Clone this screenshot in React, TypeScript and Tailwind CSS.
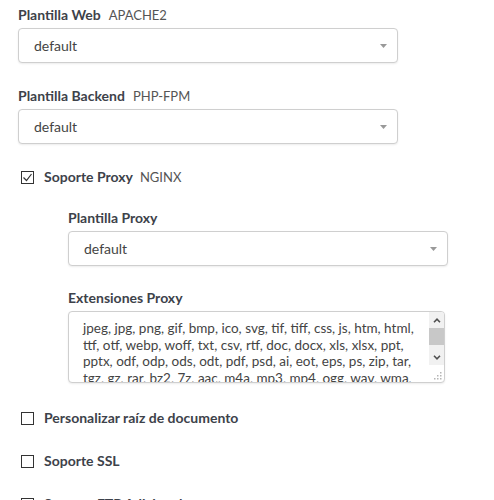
const EXTENSIONS = [
  "jpeg, jpg, png, gif, bmp, ico, svg, tif, tiff, css, js, htm, html,",
  "ttf, otf, webp, woff, txt, csv, rtf, doc, docx, xls, xlsx, ppt,",
  "pptx, odf, odp, ods, odt, pdf, psd, ai, eot, eps, ps, zip, tar,",
  "tgz, gz, rar, bz2, 7z, aac, m4a, mp3, mp4, ogg, wav, wma,",
  "3gp, avi, flv, m4v, mkv, mov, mpeg, mpg, wmv, exe, iso, dmg,",
  "swf, woff2",
];

function Caret() {
  return (
    <svg width="7" height="4" viewBox="0 0 7 4" className="shrink-0">
      <path d="M0 0h7L3.5 4z" fill="#999" />
    </svg>
  );
}

function Select({ width }: { width: string }) {
  return (
    <div
      className={`${width} h-[35px] flex items-center justify-between pl-[15px] pr-[10px] border border-[#cfcfcf] rounded-[4px] bg-white shadow-[0_1px_2px_rgba(0,0,0,0.08)]`}
    >
      <span className="text-[14px] text-[#444]">default</span>
      <Caret />
    </div>
  );
}

function Label({ title, hint }: { title: string; hint?: string }) {
  return (
    <div className="h-5 leading-5 mb-[3px] flex items-baseline gap-[8px]">
      <span className="text-[14px] font-bold text-[#3d424a]">{title}</span>
      {hint && <span className="text-[13px] text-[#555]">{hint}</span>}
    </div>
  );
}

function Check({ label, hint, checked }: { label: string; hint?: string; checked?: boolean }) {
  return (
    <div className="h-5 flex items-center pl-[3px]">
      <span className="w-[13px] h-[13px] border border-[#333] flex items-center justify-center bg-white">
        {checked && (
          <svg width="11" height="11" viewBox="0 0 11 11">
            <path d="M1.5 5.5l3 3 5-6.5" fill="none" stroke="#333" strokeWidth="1.2" />
          </svg>
        )}
      </span>
      <span className="ml-[10px] text-[14px] font-bold text-[#3d424a] leading-5">{label}</span>
      {hint && <span className="ml-[7px] text-[13px] text-[#555] leading-5">{hint}</span>}
    </div>
  );
}

// textarea with classic scrollbar and resize grip
function ExtensionsBox() {
  return (
    <div className="w-[377px] h-[72px] flex border border-[#cfcfcf] rounded-[4px] bg-white shadow-[0_1px_2px_rgba(0,0,0,0.08)] overflow-hidden">
      <div className="flex-1 overflow-hidden pl-[14px] pt-[8px] text-[13.5px] leading-[16.5px] text-[#444] whitespace-pre">
        {EXTENSIONS.join("\n")}
      </div>
      <div className="w-[15px] flex flex-col">
        <div className="h-[53px] bg-[#f1f1f1] flex flex-col">
          <div className="h-[16px] flex items-center justify-center">
            <svg width="8" height="5" viewBox="0 0 8 5">
              <path d="M1 4.2L4 1.2l3 3" fill="none" stroke="#505050" strokeWidth="1.6" />
            </svg>
          </div>
          <div className="h-[17px] bg-[#c8c8c8]" />
          <div className="flex-1" />
          <div className="h-[16px] flex items-center justify-center">
            <svg width="8" height="5" viewBox="0 0 8 5">
              <path d="M1 0.8L4 3.8l3-3" fill="none" stroke="#505050" strokeWidth="1.6" />
            </svg>
          </div>
        </div>
        <div className="flex-1 flex items-end justify-end p-[2px]">
          <svg width="8" height="8" viewBox="0 0 8 8">
            <g fill="#b5b5b5">
              <rect x="6" y="0" width="1.5" height="1.5" />
              <rect x="3" y="3" width="1.5" height="1.5" />
              <rect x="6" y="3" width="1.5" height="1.5" />
              <rect x="0" y="6" width="1.5" height="1.5" />
              <rect x="3" y="6" width="1.5" height="1.5" />
              <rect x="6" y="6" width="1.5" height="1.5" />
            </g>
          </svg>
        </div>
      </div>
    </div>
  );
}

export default function App() {
  return (
    <div className="w-[494px] h-[500px] overflow-hidden bg-white pl-[18px] pt-[5px] font-['Lato',sans-serif]">
      <Label title="Plantilla Web" hint="APACHE2" />
      <Select width="w-[380px]" />

      <div className="mt-[23px]">
        <Label title="Plantilla Backend" hint="PHP-FPM" />
        <Select width="w-[380px]" />
      </div>

      <div className="mt-[23px]">
        <Check label="Soporte Proxy" hint="NGINX" checked />
      </div>

      <div className="pl-[50px] mt-[21px]">
        <Label title="Plantilla Proxy" />
        <Select width="w-[380px]" />

        <div className="mt-[22px]">
          <Label title="Extensiones Proxy" />
          <ExtensionsBox />
        </div>
      </div>

      <div className="mt-[25px]">
        <Check label="Personalizar raíz de documento" />
      </div>
      <div className="mt-[23px]">
        <Check label="Soporte SSL" />
      </div>
      <div className="mt-[23px]">
        <Check label="Soporte FTP Adicional" />
      </div>
    </div>
  );
}
